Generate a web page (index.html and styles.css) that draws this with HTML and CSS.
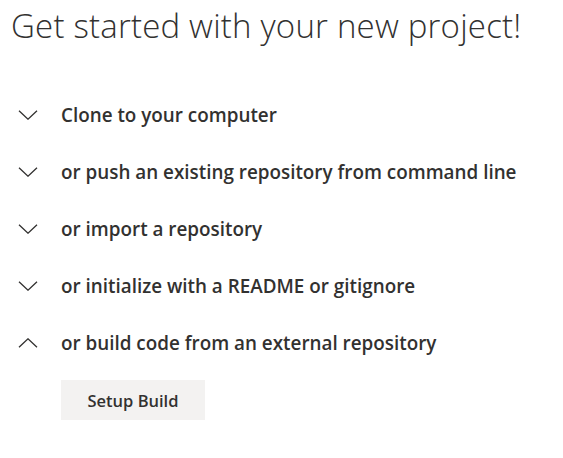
FILE: index.html
```html
<!DOCTYPE html>
<html>
<head>
<meta charset="utf-8">
<link rel="stylesheet" href="styles.css">
</head>
<body>
<div class="page">
  <h1 class="title">Get started with your new project!</h1>
  <ul class="sections">
    <li class="section"><svg class="chev" viewBox="0 0 20 10"><path d="M1 0.8 L10 9.2 L19 0.8"/></svg><span class="label">Clone to your computer</span></li>
    <li class="section"><svg class="chev" viewBox="0 0 20 10"><path d="M1 0.8 L10 9.2 L19 0.8"/></svg><span class="label">or push an existing repository from command line</span></li>
    <li class="section"><svg class="chev" viewBox="0 0 20 10"><path d="M1 0.8 L10 9.2 L19 0.8"/></svg><span class="label">or import a repository</span></li>
    <li class="section"><svg class="chev" viewBox="0 0 20 10"><path d="M1 0.8 L10 9.2 L19 0.8"/></svg><span class="label">or initialize with a README or gitignore</span></li>
    <li class="section open"><svg class="chev" viewBox="0 0 20 10"><path d="M1 9.2 L10 0.8 L19 9.2"/></svg><span class="label">or build code from an external repository</span></li>
  </ul>
  <div class="actions"><button class="btn">Setup Build</button></div>
</div>
</body>
</html>
```
FILE: styles.css
```css
html, body { margin: 0; padding: 0; background: #fff; }
body { font-family: "Open Sans", "Noto Sans", sans-serif; color: #333; }
.page { padding: 0 0 0 11px; }
.title {
  margin: 0;
  padding-top: 4px;
  font-size: 33px;
  font-weight: 300;
  line-height: 44px;
  color: #323130;
  letter-spacing: 0.2px;
}
.sections { list-style: none; margin: 38px 0 0; padding: 0; }
.section { display: flex; align-items: center; height: 57px; }
.chev { width: 20px; height: 10px; margin-left: 7px; margin-right: 23px; flex: none; }
.chev path { fill: none; stroke: #323130; stroke-width: 1.3; }
.label { font-size: 18.85px; font-weight: 600; color: #323130; }
.actions { padding-left: 50px; margin-top: 9px; }
.btn {
  font-family: inherit;
  width: 144px; height: 40px;
  border: none; background: #f3f2f1;
  font-size: 16.5px; font-weight: 600; color: #323130;
  padding: 0;
}
```
